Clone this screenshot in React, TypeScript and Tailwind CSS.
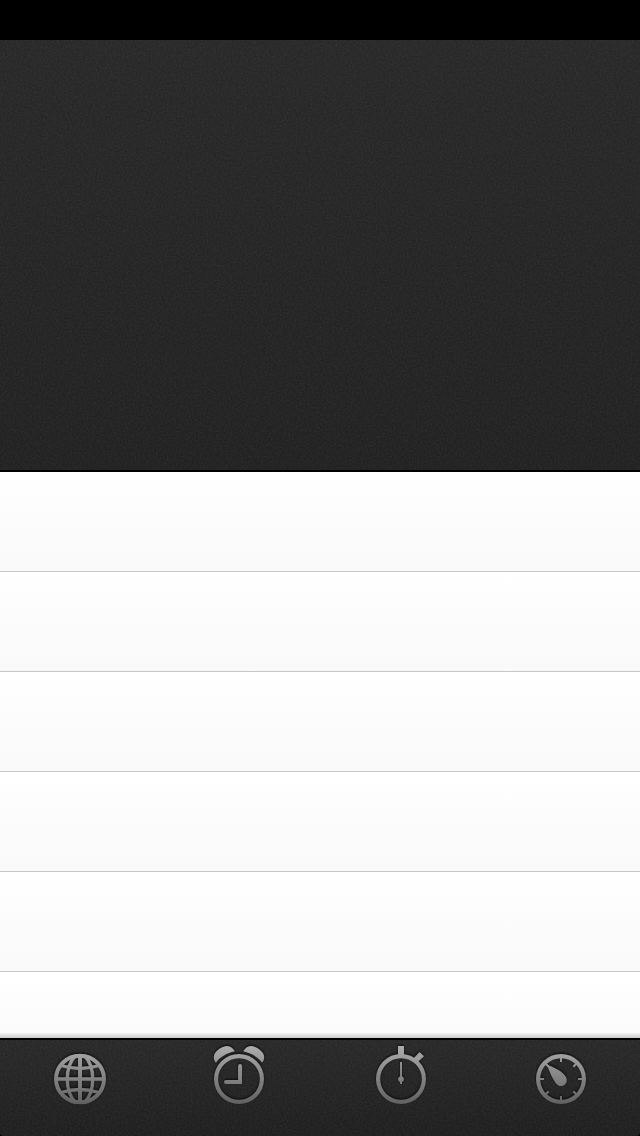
import type { ReactNode } from "react";

const METAL = "url(#metal)";

function Grain() {
  return (
    <svg className="pointer-events-none absolute inset-0 h-full w-full opacity-[0.045]" aria-hidden="true">
      <rect width="100%" height="100%" filter="url(#grain)" />
    </svg>
  );
}

function SharedDefs() {
  return (
    <svg className="absolute h-0 w-0" aria-hidden="true">
      <defs>
        <linearGradient id="metal" gradientUnits="userSpaceOnUse" x1="0" y1="16" x2="0" y2="74">
          <stop offset="0" stopColor="#acacac" />
          <stop offset="1" stopColor="#616161" />
        </linearGradient>
        <filter id="grain" x="0" y="0" width="100%" height="100%">
          <feTurbulence type="fractalNoise" baseFrequency="0.55" numOctaves="2" seed="4" />
          <feColorMatrix type="matrix" values="0 0 0 0 1  0 0 0 0 1  0 0 0 0 1  2 0 0 0 -0.6" />
        </filter>
      </defs>
    </svg>
  );
}

function TabIcon({ children }: { children: ReactNode }) {
  return (
    <svg
      viewBox="0 10 80 80"
      className="h-20 w-20 drop-shadow-[0_-1px_1px_rgba(0,0,0,0.75)]"
      fill="none"
      stroke={METAL}
      strokeWidth="3.4"
    >
      {children}
    </svg>
  );
}

function WorldIcon() {
  return (
    <TabIcon>
      <ellipse cx="40" cy="49" rx="24" ry="23.3" strokeWidth="4" />
      <rect x="38" y="25" width="4" height="48" fill={METAL} stroke="none" />
      <rect x="15" y="47.2" width="50" height="3.6" fill={METAL} stroke="none" />
      <path d="M35.5 25.5C24.5 37 24.5 61 35.5 72.5M44.5 25.5C55.5 37 55.5 61 44.5 72.5" />
      <path d="M21 35.5Q40 41.5 59 35.5M21 62.5Q40 56.5 59 62.5" />
    </TabIcon>
  );
}

function AlarmIcon() {
  return (
    <TabIcon>
      <circle cx="39" cy="49" r="22.9" strokeWidth="4.2" />
      <path
        d="M16 32.5C13.5 30.5 13.3 26 14.8 23.5C16.5 20 22.5 16.2 27 16C30.5 15.9 33 18.5 34.8 21.3C27 23 20 27 16 32.5Z"
        fill={METAL}
        stroke="none"
      />
      <path
        d="M62 32.5C64.5 30.5 64.7 26 63.2 23.5C61.5 20 55.5 16.2 51 16C47.5 15.9 45 18.5 43.2 21.3C51 23 58 27 62 32.5Z"
        fill={METAL}
        stroke="none"
      />
      <path d="M40.1 36L40 52H26" strokeWidth="4" strokeLinecap="round" />
    </TabIcon>
  );
}

function StopwatchIcon() {
  return (
    <TabIcon>
      <circle cx="41" cy="49" r="22.9" strokeWidth="4.2" />
      <rect x="38" y="16" width="6" height="10" fill={METAL} stroke="none" />
      <path d="M59.6 21.9L64 26.2L57.2 32.5L53.4 28.4Z" fill={METAL} stroke="none" />
      <path
        d="M40.1 32H42V46.2Q44 47.2 44 49Q44 50.8 42 52V54H40V52Q38 50.8 38 49Q38 47.2 40.1 46.2Z"
        fill={METAL}
        stroke="none"
      />
    </TabIcon>
  );
}

function TimerIcon() {
  return (
    <TabIcon>
      <circle cx="41" cy="49" r="22.9" strokeWidth="4.2" />
      <g fill={METAL} stroke="none">
        <rect x="40" y="26" width="2" height="6" />
        <rect x="40" y="66" width="2" height="6" />
        <rect x="18" y="48" width="6" height="2" />
        <rect x="58" y="48" width="6" height="2" />
        <path d="M27 35C34 37 41 40.5 45 45.5C47.5 48.5 47.3 52 45 54.5C42 57 38.5 56.5 36 53.5C32 48.5 29.5 41 27 35Z" />
      </g>
      <path d="M24 32L29 37M58 32L53.3 36.7M24 66L28.7 61.3M58 66L53.3 61.3" strokeWidth="2.2" />
    </TabIcon>
  );
}

const tabs = [
  { name: "world", icon: <WorldIcon /> },
  { name: "alarm", icon: <AlarmIcon /> },
  { name: "stopwatch", icon: <StopwatchIcon /> },
  { name: "timer", icon: <TimerIcon /> },
];

export default function App() {
  return (
    <div className="flex h-[1136px] w-[640px] flex-col overflow-hidden bg-black">
      <SharedDefs />
      <header className="h-10 shrink-0 bg-black" />
      <section className="relative h-[432px] shrink-0 border-b-2 border-black bg-linear-to-b from-[#282828] to-[#212121]">
        <Grain />
      </section>
      <main className="relative flex h-[566px] shrink-0 flex-col overflow-hidden bg-white">
        {[0, 1, 2, 3, 4, 5].map((row) => (
          <div
            key={row}
            className="h-[100px] shrink-0 border-b border-[#c8c8c8] bg-linear-to-b from-white to-[#f9f9f9]"
          />
        ))}
        <div className="absolute inset-x-0 bottom-0 h-1.5 bg-linear-to-b from-transparent to-black/20" />
      </main>
      <nav className="relative h-[98px] shrink-0 overflow-hidden rounded-b-[4px] border-t-2 border-black bg-linear-to-b from-[#292929] to-[#1f1f1f]">
        <Grain />
        <div className="relative grid grid-cols-4">
          {tabs.map((tab) => (
            <div key={tab.name} className="flex justify-center">
              {tab.icon}
            </div>
          ))}
        </div>
      </nav>
    </div>
  );
}
